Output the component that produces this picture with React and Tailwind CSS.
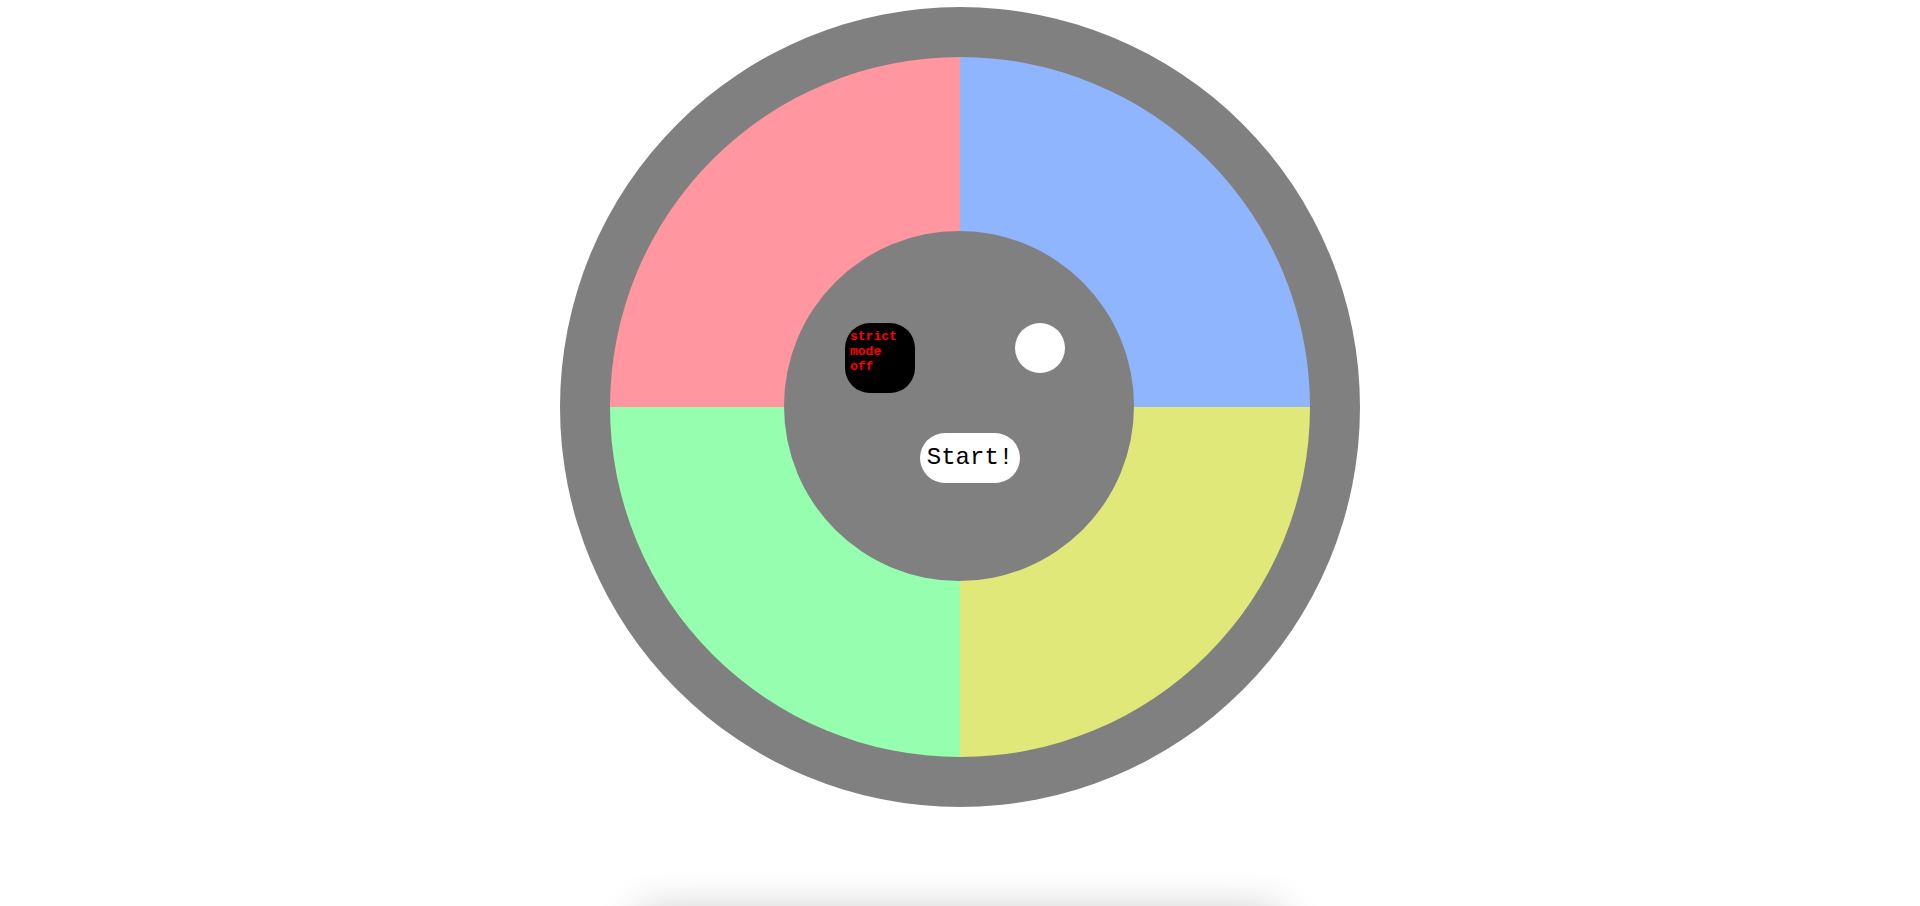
import React from 'react'

const mono = { fontFamily: '"Liberation Mono", "Courier New", monospace' }

const App = () => {
  return (
    <main className="bg-white h-screen flex flex-col items-center pt-[7px] overflow-hidden">
      <div className="relative shrink-0 w-[800px] h-[800px] rounded-full bg-[#808080] p-[50px]">
        <div className="w-[700px] h-[700px] rounded-full overflow-hidden grid grid-cols-2 grid-rows-2">
          <div className="bg-[#ff96a0]"></div>
          <div className="bg-[#8fb5fe]"></div>
          <div className="bg-[#96feaf]"></div>
          <div className="bg-[#dfe879]"></div>
        </div>
        <div className="absolute left-[224px] top-[224px] w-[350px] h-[350px] rounded-full bg-[#808080] pt-[92px]">
          <div className="flex items-start pl-[61px] gap-[100px]">
            <button
              className="w-[70px] h-[70px] rounded-[25px] bg-black text-left pl-[5px] pt-[6px] flex flex-col items-start text-[13px] leading-[15px] font-bold text-[#ff0000]"
              style={mono}
            >
              <span>strict</span>
              <span>mode</span>
              <span>off</span>
            </button>
            <div className="w-[50px] h-[50px] rounded-full bg-white"></div>
          </div>
          <button
            className="mt-[40px] ml-[136px] w-[100px] h-[50px] rounded-full bg-white text-black text-[24px] flex items-center justify-center"
            style={mono}
          >
            Start!
          </button>
        </div>
      </div>
      <div className="shrink-0 mt-[102px] w-[660px] h-[80px] rounded-[30px] bg-white shadow-[0_0_40px_rgba(0,0,0,0.2)]"></div>
    </main>
  )
}

export default App
